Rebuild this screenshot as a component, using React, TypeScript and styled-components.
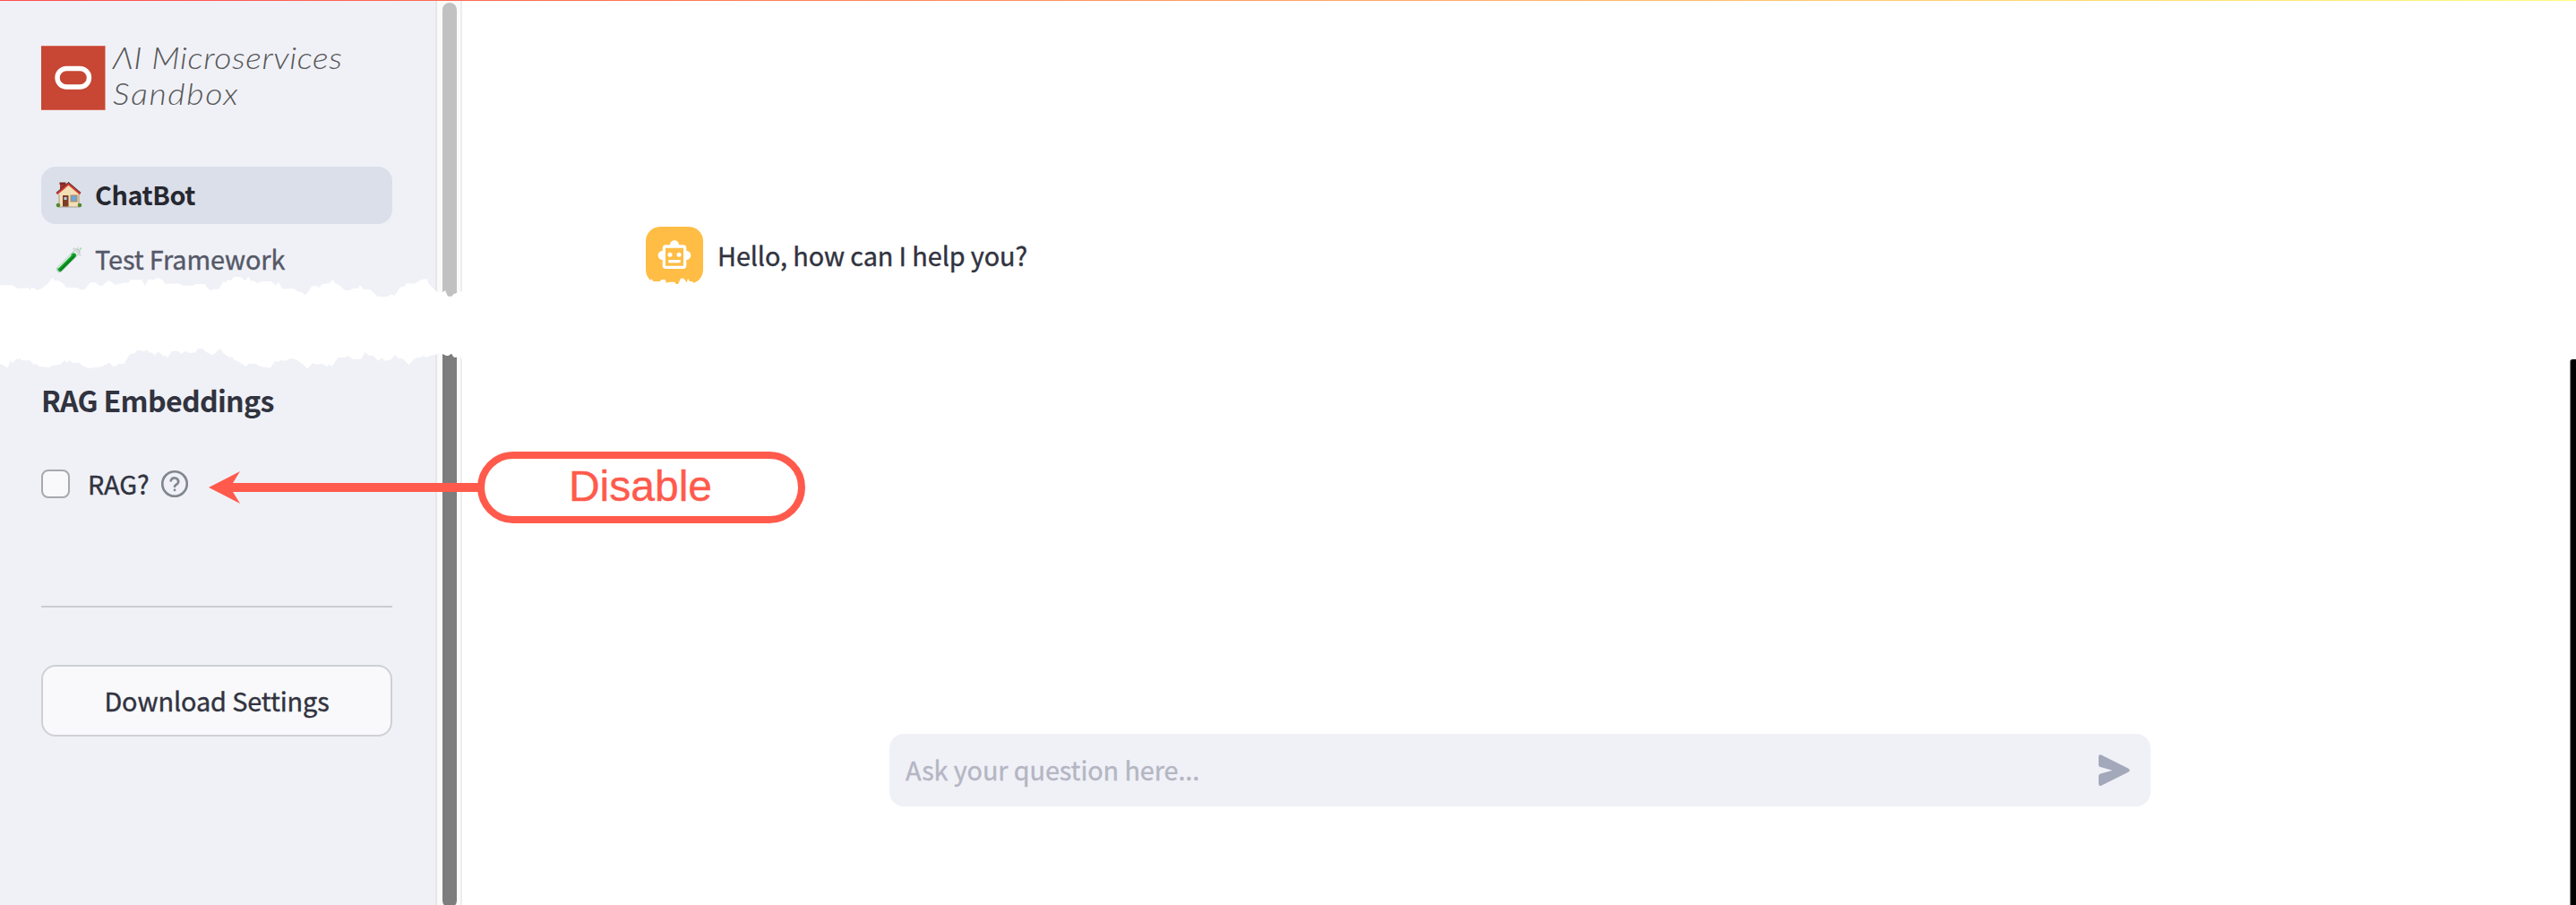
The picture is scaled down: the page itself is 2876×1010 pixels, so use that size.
import React from "react";
import styled, { createGlobalStyle, css } from "styled-components";

const sans = '"Noto Sans CJK SC", "Noto Sans", sans-serif';

const GlobalStyle = createGlobalStyle`
  * { box-sizing: border-box; }
  body { margin: 0; background: #fff; font-family: ${sans}; color: #31333f; }
  h3, p { margin: 0; }
`;

const Page = styled.div`
  position: relative;
  display: flex;
  flex-direction: column;
  width: 2876px;
  height: 1010px;
  overflow: hidden;
`;

const Decoration = styled.div`
  height: 1px;
  flex: none;
  background: linear-gradient(90deg, #ff4b4b, #fffd80);
`;

const Body = styled.div`
  display: flex;
  flex: 1;
  min-height: 0;
`;

const Sidebar = styled.aside`
  width: 486px;
  flex: none;
  background: #f0f1f7;
  padding: 50px 48px 0 46px;
  display: flex;
  flex-direction: column;
`;

const Track = styled.div`
  width: 30px;
  flex: none;
  background: #fafafa;
  border-left: 2px solid #e7e7e7;
  border-right: 2px solid #ededed;
  padding: 2px 4px 0 6px;
  display: flex;
  flex-direction: column;
  justify-content: space-between;
`;

const Thumb = styled.div<{ $dark?: boolean }>`
  width: 16px;
  flex: none;
  height: ${(p) => (p.$dark ? 626 : 332)}px;
  margin-bottom: ${(p) => (p.$dark ? -3 : 0)}px;
  background: ${(p) => (p.$dark ? "#7d7d7d" : "#c1c1c1")};
  border-radius: ${(p) => (p.$dark ? "0 0 8px 8px" : "8px 8px 0 0")};
`;

const Brand = styled.div`
  display: flex;
  height: 72px;
  gap: 8px;
`;

const BrandName = styled.div`
  font: italic 300 34px/39.5px Lato, sans-serif;
  color: #585858;
  white-space: nowrap;
  margin-top: -7px;
  transform: scaleX(1.1);
  transform-origin: left;
`;

const BrandLine = styled.div<{ $spacing: number }>`
  letter-spacing: ${(p) => p.$spacing}px;
`;

const Nav = styled.nav`
  display: flex;
  flex-direction: column;
  gap: 8px;
  margin-top: 63px;
`;

const NavItem = styled.a<{ $active?: boolean }>`
  display: flex;
  align-items: center;
  gap: 14px;
  height: 64px;
  padding: 0 0 1px 16px;
  border-radius: 16px;
  font-size: 28.8px;
  line-height: 44px;
  color: #555867;
  ${(p) =>
    p.$active &&
    css`
      background: #dbdfe9;
      color: #262730;
      font-weight: 700;
    `}
`;

const Label = styled.span<{ $spacing?: number; $strong?: boolean }>`
  letter-spacing: ${(p) => p.$spacing ?? -0.08}px;
  -webkit-text-stroke: ${(p) => (p.$strong ? 0 : 0.4)}px currentColor;
  white-space: nowrap;
  padding-bottom: 2px;
`;

const SectionTitle = styled.h3`
  margin-top: 100px;
  font-size: 32.2px;
  line-height: 48px;
  font-weight: 700;
`;

const CheckRow = styled.label`
  display: flex;
  align-items: center;
  height: 48px;
  margin-top: 46px;
  font-size: 28.8px;
`;

const CheckBox = styled.span`
  width: 32px;
  height: 32px;
  border: 2px solid #a7a9ae;
  border-radius: 8px;
  background: #f9f9fb;
  margin-right: 20px;
`;

const HelpIcon = styled.svg`
  margin-left: 12px;
`;

const Divider = styled.div`
  height: 2px;
  margin-top: 112px;
  background: #cbccd2;
`;

const DownloadButton = styled.button`
  height: 80px;
  margin-top: 64px;
  padding: 0;
  border: 2px solid #cfd0d4;
  border-radius: 16px;
  background: #f9f9fb;
  color: #31333f;
  font: 400 28.8px/44px ${sans};
`;

const Main = styled.main`
  flex: 1;
  display: flex;
  flex-direction: column;
  justify-content: space-between;
  padding: 252px 0 110px;
`;

const Message = styled.div`
  display: flex;
  align-items: center;
  gap: 16px;
  margin-left: 205px;
  height: 64px;
  font-size: 28.8px;
`;

const Avatar = styled.div`
  display: flex;
  align-items: center;
  justify-content: center;
  width: 64px;
  height: 64px;
  border-radius: 16px;
  background: #ffbd45;
`;

const ChatInput = styled.div`
  display: flex;
  align-items: center;
  justify-content: space-between;
  align-self: center;
  width: 1408px;
  height: 81px;
  margin-left: 9px;
  padding: 0 17px 0 18px;
  border-radius: 16px;
  background: #f0f1f7;
  color: #b4b6c3;
  font-size: 28.8px;
`;

const WindowEdge = styled.div`
  width: 7px;
  flex: none;
  margin-top: 400px;
  background: #000;
  border-left: 1px solid #8c8c8c;
  border-top-left-radius: 3px;
`;

const TornGap = styled.svg`
  position: absolute;
  left: 0;
  top: 300px;
`;

const Callout = styled.div`
  position: absolute;
  left: 233px;
  top: 504px;
  display: flex;
  align-items: center;
`;

const Pill = styled.div`
  width: 366px;
  height: 80px;
  padding-right: 2px;
  border: 8px solid #ff5a4b;
  border-radius: 40px;
  background: #fff;
  color: #ff5a4b;
  font: 48px/62px "Liberation Sans", Arial, sans-serif;
  -webkit-text-stroke: 0.4px #ff5a4b;
  text-align: center;
`;

const Arrow = styled.svg`
  margin: -1px -2px 0 0;
`;

const OracleMark = () => (
  <svg width="72" height="72" viewBox="0 0 72 72">
    <rect width="71.6" height="72" fill="#d9695a" />
    <rect x="0" y="1" width="71" height="70" fill="#c74634" />
    <rect x="18" y="25.500" width="35.5" height="20.5" rx="10.2" fill="none" stroke="#fff" strokeWidth="5.4" />
  </svg>
);

const House = () => (
  <svg width="30" height="30" viewBox="0 0 30 30">
    <rect x="3" y="26.5" width="24" height="2" fill="#a3a098" />
    <rect x="5" y="1.500" width="6" height="8" fill="#a8332c" />
    <rect x="4.500" y="0.500" width="7" height="2.500" fill="#7d2a25" />
    <path d="M4 13 15 3 26 13V27.500H4Z" fill="#f3dfb6" />
    <path d="M4 14V24M26 14V24" stroke="#b9a689" strokeWidth="1.200" />
    <path d="M1 12.500 14.500 1 28 12.500" fill="none" stroke="#3d2a2a" strokeWidth="1.400" />
    <path d="M1.500 13.500 14.500 2.500 27.500 13.500" fill="none" stroke="#cf3a30" strokeWidth="2.200" />
    <rect x="8" y="15" width="6.500" height="12.500" fill="#7b3e26" />
    <rect x="9.500" y="17" width="3" height="3" fill="#b6d3e8" />
    <rect x="17" y="15" width="7" height="7" fill="#6aa5d8" stroke="#b58a56" />
    <circle cx="3" cy="26" r="2.300" fill="#4f8a2c" />
    <circle cx="27" cy="26" r="2.300" fill="#4f8a2c" />
  </svg>
);

const TestTube = () => (
  <svg width="30" height="30" viewBox="0 0 30 30">
    <path d="M4.500 25.500 24 6" stroke="#bfc5c5" strokeWidth="7" strokeLinecap="round" />
    <path d="M4.500 25.500 23.500 6.500" stroke="#eef3f2" strokeWidth="5.200" strokeLinecap="round" />
    <path d="M5 25.400 20.500 9.900" stroke="#12a52a" strokeWidth="5.200" strokeLinecap="round" />
    <path d="M5.800 26 21 10.800" stroke="#0a7d1e" strokeWidth="1.800" strokeLinecap="round" />
    <path d="M3.300 23.600 17 10" stroke="#d9f5dc" strokeWidth="1.300" strokeLinecap="round" />
    <path d="M20.500 2.500 27.500 9.500" stroke="#d3d9d9" strokeWidth="2.400" strokeLinecap="round" />
    <circle cx="28" cy="2.500" r="1.200" fill="#a5e6a4" />
    <circle cx="25" cy="1.500" r="0.900" fill="#bdeebb" />
  </svg>
);

const Robot = () => (
  <svg width="40" height="40" viewBox="0 0 24 24" fill="#fff">
    <path d="M20 9V7c0-1.100-.9-2-2-2h-3c0-1.660-1.340-3-3-3S9 3.340 9 5H6c-1.100 0-2 .9-2 2v2c-1.660 0-3 1.340-3 3s1.340 3 3 3v4c0 1.100.9 2 2 2h12c1.100 0 2-.9 2-2v-4c1.660 0 3-1.340 3-3s-1.340-3-3-3zm-2 10H6V7h12v12z" />
    <circle cx="9" cy="11.500" r="1.500" />
    <circle cx="15" cy="11.500" r="1.500" />
    <path d="M8 15h8v2H8z" />
  </svg>
);

const tornEdges =
  "M0 55L40 55 60 66 95 64 100 72 105 64 118 66 122 72 140 66 160 50 175 30 185 41 195 38 210 48 222 62 260 64 270 70 285 68 303 45 322 46 328 54 342 58 362 40 370 42 385 53 400 52 410 47 430 47 437 37 475 37 486 57 497 36 515 36 530 30 545 38 552 50 600 50 612 56 645 56 655 51 685 51 697 66 707 74 715 68 733 68 748 43 757 46 763 37 773 40 783 27 805 28 822 40 832 26 842 42 850 40 860 48 880 42 908 42 918 52 927 54 932 43 945 67 985 67 995 75 1010 78 1022 88 1030 80 1045 58 1062 58 1070 63 1078 52 1105 48 1113 36 1125 50 1133 52 1155 72 1172 72 1178 66 1200 65 1206 54 1217 68 1240 70 1265 93 1295 94 1308 86 1315 86 1321 90 1340 62 1352 60 1362 48 1388 50 1412 36 1430 34 1436 50 1462 76 1480 80 1491 72 1500 92 1513 92 1520 84 1545 76L1600 76 1600 304 1548 304 1540 292 1532 296 1520 296 1512 284 1502 291 1495 291 1482 285 1470 282 1458 288 1442 290 1428 298 1420 290 1408 297 1395 298 1385 304 1370 322 1348 300 1335 300 1323 288 1310 304 1288 308 1280 298 1267 308 1250 290 1235 290 1223 278 1210 302 1182 302 1165 291 1158 296 1132 297 1112 326 1102 320 1096 328 1078 318 1060 320 1048 315 1030 334 1012 318 992 304 973 299 958 308 940 306 932 312 920 310 905 332 868 326 858 318 832 318 825 328 795 308 785 306 777 294 770 298 748 282 737 266 718 284 710 288 690 278 680 267 662 268 655 280 635 282 620 276 606 285 598 276 575 276 562 297 553 290 545 292 535 280 527 280 517 290 512 282 500 280 492 270 485 276 460 272 452 283 435 286 415 318 398 318 390 325 378 327 367 314 340 328 298 333 275 324 268 316 242 314 234 306 224 314 216 306 202 320 175 324 168 330 130 327 122 318 112 322 102 307 74 307 68 300 60 304 55 300 42 316 35 308 25 332 10 322 0 318Z";

const avatarTear =
  "M2155 24L2170 30 2178 40 2183 33 2188 42 2210 42 2216 36 2228 36 2232 47 2242 44 2260 44 2265 52 2271 51 2280 32 2290 32 2300 46 2304 32 2310 42 2318 42 2325 48 2340 40 2360 24 2360 75 2155 75Z";

export default function App() {
  return (
    <Page>
      <GlobalStyle />
      <Decoration />
      <Body>
        <Sidebar>
          <Brand>
            <OracleMark />
            <BrandName>
              <BrandLine $spacing={0.55}>ΛI Microservices</BrandLine>
              <BrandLine $spacing={1.5}>Sandbox</BrandLine>
            </BrandName>
          </Brand>
          <Nav>
            <NavItem $active>
              <House />
              <Label $strong $spacing={-0.4}>ChatBot</Label>
            </NavItem>
            <NavItem>
              <TestTube />
              <Label>Test Framework</Label>
            </NavItem>
          </Nav>
          <SectionTitle>
            <Label $strong $spacing={-0.7}>RAG Embeddings</Label>
          </SectionTitle>
          <CheckRow>
            <CheckBox />
            <Label>RAG?</Label>
            <HelpIcon width="32" height="32" viewBox="0 0 24 24" fill="none" stroke="#808790" strokeWidth="2" strokeLinecap="round">
              <circle cx="12" cy="12" r="10.300" />
              <path d="M8.800 9.300a3.300 3.300 0 0 1 6.400.9c0 2.200-3.200 2.600-3.200 4" />
              <path d="M12 17.200h.01" />
            </HelpIcon>
          </CheckRow>
          <Divider />
          <DownloadButton>
            <Label>Download Settings</Label>
          </DownloadButton>
        </Sidebar>
        <Track>
          <Thumb />
          <Thumb $dark />
        </Track>
        <Main>
          <Message>
            <Avatar>
              <Robot />
            </Avatar>
            <Label>Hello, how can I help you?</Label>
          </Message>
          <ChatInput>
            <Label>Ask your question here...</Label>
            <svg width="46" height="46" viewBox="0 0 46 46" fill="#a3a8ba">
              <path d="M5 7.500Q5 4.300 8 5.600L38.500 20.800Q41 22.500 38.500 24.600L8 39.700Q5 41 5 37.500V29Q5 27 7 26.500L20.500 22.700 7 19Q5 18.500 5 16.500Z" />
            </svg>
          </ChatInput>
        </Main>
        <WindowEdge />
      </Body>
      <TornGap width="900" height="130" viewBox="0 0 2700 390" fill="#fff">
        <path d={tornEdges} />
        <path d={avatarTear} />
      </TornGap>
      <Callout>
        <Arrow width="302" height="36" viewBox="0 0 302 36" fill="#ff5a4b">
          <path d="M0 18 35 0 27 13H302V23H27L35 36Z" />
        </Arrow>
        <Pill>Disable</Pill>
      </Callout>
    </Page>
  );
}
